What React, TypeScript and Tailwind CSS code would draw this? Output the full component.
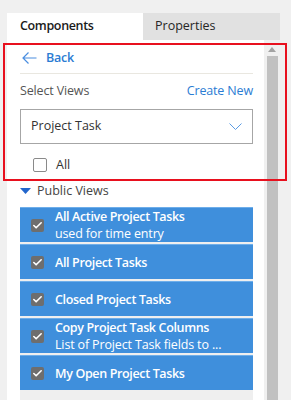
import { Check } from "lucide-react";

const font = { fontFamily: '"Open Sans", "Noto Sans", sans-serif' };

const views = [
  { title: "All Active Project Tasks", sub: "used for time entry" },
  { title: "All Project Tasks" },
  { title: "Closed Project Tasks" },
  { title: "Copy Project Task Columns", sub: "List of Project Task fields to ..." },
  { title: "My Open Project Tasks" },
];

function ViewRow({ title, sub }: { title: string; sub?: string }) {
  return (
    <div className="flex h-[35px] items-center border-t border-[#6eaeea] bg-[#3f8fdc] pl-[11px] text-white">
      <span className="flex h-[13px] w-[13px] shrink-0 items-center justify-center rounded-[2px] bg-[#6e6e6e]">
        <Check size={11} strokeWidth={3.5} className="text-white" />
      </span>
      <div className="ml-[11px] flex flex-col leading-[17px]">
        <span className="text-[12.5px] font-semibold tracking-[-0.35px]">{title}</span>
        {sub && <span className="text-[12.5px] tracking-[-0.15px]">{sub}</span>}
      </div>
    </div>
  );
}

export default function App() {
  return (
    <div
      className="relative h-[400px] w-[291px] overflow-hidden bg-[#f0f0f0]"
      style={font}
    >
      <div className="ml-[7px] pt-[13px]">
        <div className="flex h-[27px] w-[273px]">
          <div className="flex w-[136px] items-center bg-white pl-[13px] text-[12.5px] font-semibold tracking-[-0.35px] text-[#1a1a1a]">
            Components
          </div>
          <div className="flex flex-1 items-center bg-[#e1e1e1] pl-[12px] text-[12.5px] text-[#262626]">
            Properties
          </div>
        </div>
        <div className="flex h-[360px] w-[273px]">
          <div className="w-[257px] bg-white pl-[13px]">
            <div className="w-[233px]">
              <div className="mt-[6px] flex h-[24px] items-center text-[#2b7cd3]">
                <svg width="15" height="12" viewBox="0 0 15 12" className="ml-[2px]">
                  <path d="M14.5 6H1M6.5 0.5L1 6l5.5 5.5" fill="none" stroke="#4a8ee0" strokeWidth="1.2" />
                </svg>
                <span className="ml-[9px] text-[12.5px] font-semibold tracking-[-0.2px]">Back</span>
              </div>
              <div className="mt-[3px] border-t border-[#e9e7e0]" />
              <div className="mt-[8px] flex h-[18px] items-center justify-between text-[12.5px] tracking-[-0.15px]">
                <span className="text-[#555555]">Select Views</span>
                <span className="text-[#2b7cd3]">Create New</span>
              </div>
              <div className="mt-[9px] flex h-[35px] items-center justify-between border border-[#a6a6a6] pl-[10px] pr-[10px] text-[12.5px] text-[#333333]">
                <span>Project Task</span>
                <svg width="13" height="7" viewBox="0 0 13 7">
                  <path d="M0.5 0.5L6.5 6.5l6-6" fill="none" stroke="#5b9be3" strokeWidth="1" />
                </svg>
              </div>
              <div className="mt-[11px] flex h-[20px] items-center pl-[13px]">
                <span className="h-[14px] w-[14px] rounded-[2px] border border-[#8a8a8a] bg-white" />
                <span className="ml-[9px] text-[12.5px] text-[#333333]">All</span>
              </div>
              <div className="mt-[6px] flex h-[20px] items-center">
                <svg width="11" height="6" viewBox="0 0 11 6">
                  <path d="M0 0h11L5.5 6z" fill="#2266cc" />
                </svg>
                <span className="ml-[6px] text-[12.5px] text-[#444444]">Public Views</span>
              </div>
              <div className="mt-[6px] flex flex-col gap-[2px] bg-[#efefef]">
                {views.map((v) => (
                  <ViewRow key={v.title} {...v} />
                ))}
                <div className="h-[20px] bg-[#efefef]" />
              </div>
            </div>
          </div>
          <div className="flex w-[16px] flex-col items-center bg-[#f0f0f0]">
            <svg width="8" height="5" viewBox="0 0 8 5" className="mt-[7px]">
              <path d="M0 5L4 0l4 5z" fill="#a3a3a3" />
            </svg>
            <div className="mt-[4px] w-[11px] flex-1 bg-[#c1c1c1]" />
          </div>
        </div>
      </div>
      <div className="absolute left-[3px] top-[43px] h-[138px] w-[284px] border-2 border-[#e8101e]" />
    </div>
  );
}
